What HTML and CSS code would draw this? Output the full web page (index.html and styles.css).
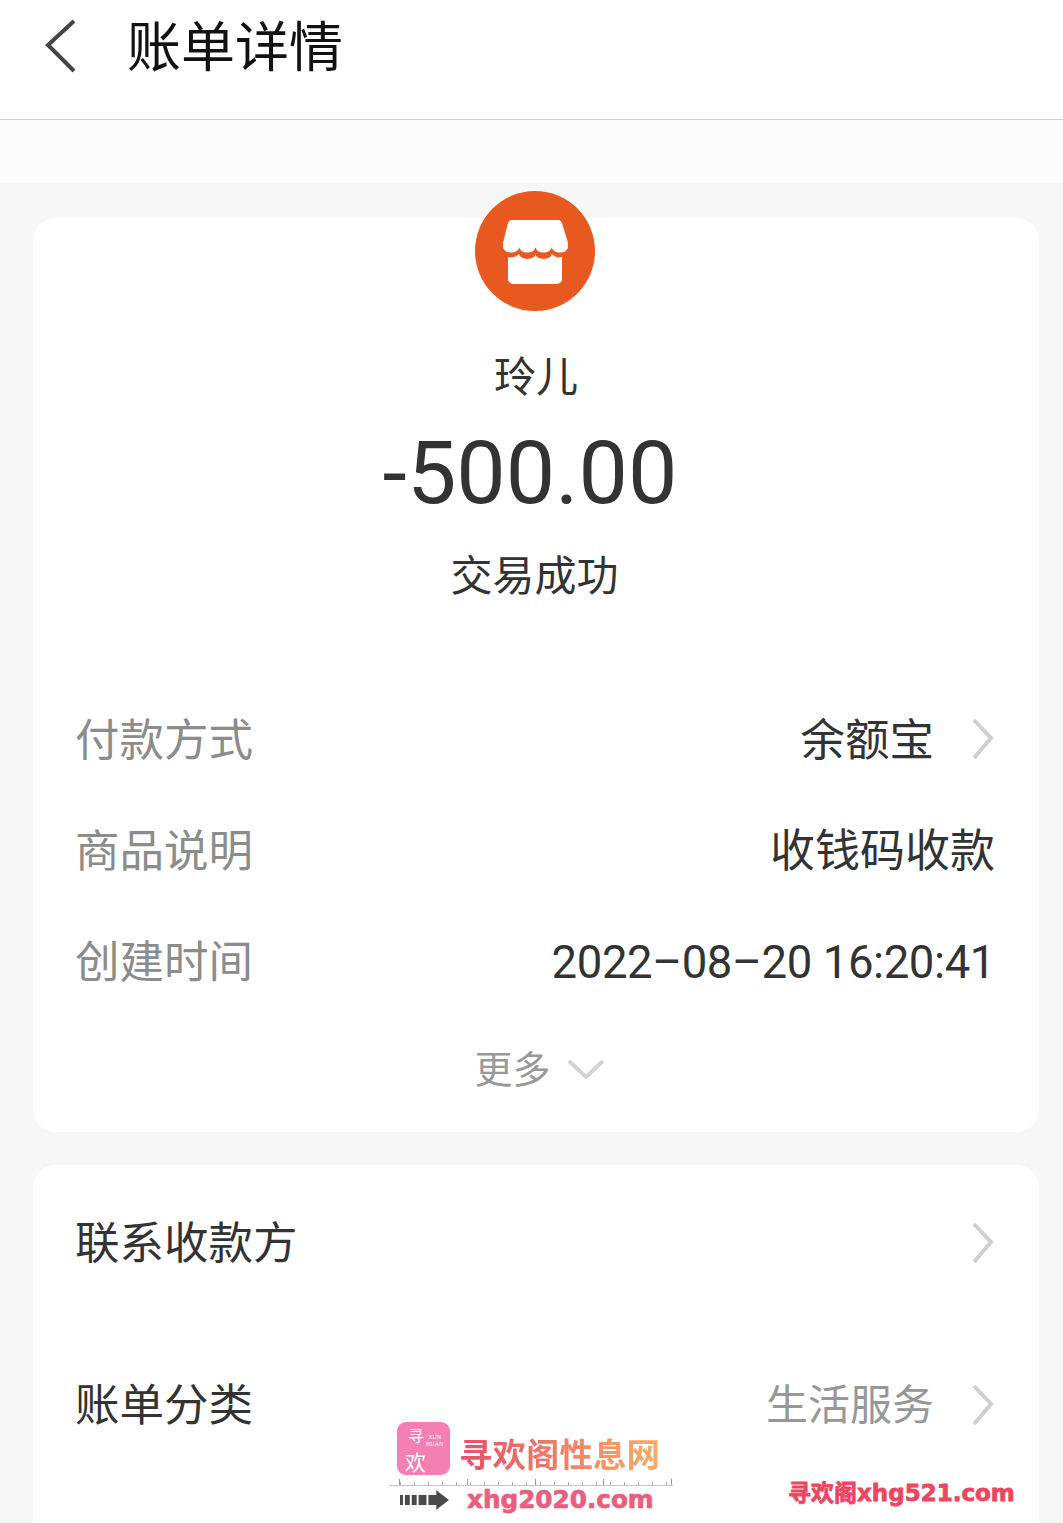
FILE: index.html
```html
<!DOCTYPE html>
<html lang="zh-CN">
<head>
    <meta charset="UTF-8">
    <meta name="viewport" content="width=device-width, initial-scale=1.0">
    <title>账单详情</title>
    <link rel="stylesheet" href="styles.css">
</head>
<body>
    <div class="page">
        <header class="header">
            <svg class="back-icon" viewBox="0 0 34 54">
                <path d="M30 2 L4 26 L30 52"></path>
            </svg>
            <h1 class="title">账单详情</h1>
        </header>
        <div class="band"></div>

        <section class="card card-main">
            <div class="avatar">
                <svg viewBox="0 0 120 120">
                    <circle cx="60" cy="60" r="60" fill="#e8591f"></circle>
                    <path fill="#fff" d="M37 29 H83 Q86 29 87 32 L93 52 V56 a8.125 5.5 0 0 1 -16.25 0 a8.125 5.5 0 0 1 -16.25 0 a8.125 5.5 0 0 1 -16.25 0 a8.125 5.5 0 0 1 -16.25 0 V52 L33 32 Q34 29 37 29 Z"></path>
                    <path fill="#fff" d="M33 66 Q38 68 44.25 63 a8.125 5 0 0 0 16.25 0 a8.125 5 0 0 0 16.25 0 Q82 68 87 66 V88 a5 5 0 0 1 -5 5 H38 a5 5 0 0 1 -5 -5 Z"></path>
                </svg>
            </div>
            <div class="name">玲儿</div>
            <div class="amount">-500.00</div>
            <div class="status">交易成功</div>

            <div class="rows">
                <div class="row">
                    <span class="label">付款方式</span>
                    <span class="value value-short">余额宝</span>
                    <svg class="arrow" viewBox="0 0 24 44"><path d="M3 3 L20 21 L3 41"></path></svg>
                </div>
                <div class="row">
                    <span class="label">商品说明</span>
                    <span class="value">收钱码收款</span>
                </div>
                <div class="row">
                    <span class="label">创建时间</span>
                    <span class="value date">2022–08–20 16:20:41</span>
                </div>
            </div>

            <div class="more">
                <span>更多</span>
                <svg class="more-icon" viewBox="0 0 38 22"><path d="M2 3 L19 19 L36 3"></path></svg>
            </div>
        </section>

        <section class="card card-second">
            <div class="row row-tall">
                <span class="label-dark">联系收款方</span>
                <svg class="arrow" viewBox="0 0 24 44"><path d="M3 3 L20 21 L3 41"></path></svg>
            </div>
            <div class="row row-tall">
                <span class="label-dark">账单分类</span>
                <span class="value muted">生活服务</span>
                <svg class="arrow" viewBox="0 0 24 44"><path d="M3 3 L20 21 L3 41"></path></svg>
            </div>
        </section>

        <!-- watermarks sit on top of the screenshot -->
        <div class="mark-site">
            <div class="mark-top">
                <div class="mark-logo">
                    <span class="mark-logo-xun">寻</span>
                    <span class="mark-logo-huan">欢</span>
                    <span class="mark-logo-en">XUN<br>HUAN</span>
                </div>
                <div class="mark-name">寻欢阁性息网</div>
            </div>
            <div class="mark-ruler"></div>
            <div class="mark-bottom">
                <svg class="mark-arrow" viewBox="0 0 50 20">
                    <path d="M0 5 H3 V15 H0 Z M5 5 H10 V15 H5 Z M12 5 H17 V15 H12 Z M19 5 H27 V15 H19 Z M29 5 H37 V0 L50 10 L37 20 V15 H29 Z"></path>
                </svg>
                <div class="mark-url">xhg2020.com</div>
            </div>
        </div>
        <div class="mark-corner">寻欢阁xhg521.com</div>
    </div>
</body>
</html>
```

FILE: styles.css
```css
* {
    box-sizing: border-box;
}
body {
    margin: 0;
    font-family: "Noto Sans CJK SC", "Noto Sans", sans-serif;
    background-color: #f7f7f7;
}
.page {
    position: relative;
    width: 1063px;
    height: 1523px;
    overflow: hidden;
}
.header {
    display: flex;
    align-items: flex-start;
    height: 120px;
    padding: 19px 0 0 44px;
    background-color: #fff;
    border-bottom: 1px solid #cfcfcf;
}
.back-icon {
    width: 34px;
    height: 54px;
    flex: none;
}
.back-icon path {
    fill: none;
    stroke: #444;
    stroke-width: 4;
}
.title {
    margin: -13px 0 0 49px;
    font-size: 54px;
    font-weight: 400;
    line-height: 76px;
    color: #111;
}
.band {
    height: 63px;
    background-color: #fcfcfc;
}
.card {
    display: flow-root;
    margin: 0 24px 0 33px;
    background-color: #fff;
    border-radius: 22px;
}
.card-main {
    height: 914px;
    margin-top: 35px;
    padding: 0 44px;
}
.card-second {
    height: 400px;
    margin-top: 33px;
    padding: 0 44px;
}
.avatar {
    width: 120px;
    height: 120px;
    margin: -27px 0 0 398px;
}
.avatar svg {
    display: block;
    width: 120px;
    height: 120px;
}
.name {
    margin-top: 31px;
    text-align: center;
    font-size: 42px;
    line-height: 64px;
    color: #333;
}
.amount {
    margin-top: 16px;
    margin-left: -12px;
    text-align: center;
    font-family: Roboto, sans-serif;
    font-size: 88px;
    line-height: 102px;
    color: #333;
}
.status {
    margin-top: 19px;
    margin-left: -3px;
    text-align: center;
    font-size: 42px;
    line-height: 60px;
    color: #333;
}
.rows {
    margin-top: 78px;
}
.row {
    display: flex;
    align-items: center;
    height: 111px;
}
.row-tall {
    height: 162px;
}
.row-tall:first-child {
    margin-top: -7px;
}
.label {
    margin-left: -2px;
    font-size: 44.5px;
    color: #8c8c8c;
}
.label-dark {
    margin-left: -2px;
    font-size: 44.5px;
    color: #333;
}
.value {
    margin-left: auto;
    font-size: 45px;
    color: #333;
}
.value-short {
    font-size: 44.5px;
}
.date {
    padding-top: 8px;
    font-family: Roboto, sans-serif;
    font-size: 45.5px;
    letter-spacing: -0.4px;
}
.muted {
    font-size: 42px;
    color: #979797;
}
.arrow {
    flex: none;
    width: 24px;
    height: 44px;
    margin-top: 4px;
    margin-left: 37px;
}
.row-tall .arrow {
    margin-top: 8px;
}
.label-dark + .arrow {
    margin-left: auto;
}
.arrow path {
    fill: none;
    stroke: #cfcfcf;
    stroke-width: 4;
}
.more {
    display: flex;
    justify-content: center;
    align-items: center;
    gap: 16px;
    margin-top: 25px;
    padding-left: 7px;
    font-size: 38px;
    line-height: 56px;
    color: #999;
}
.more-icon {
    width: 38px;
    height: 22px;
    margin-top: 4px;
}
.more-icon path {
    fill: none;
    stroke: #d4d4d4;
    stroke-width: 4;
}
.mark-site {
    position: absolute;
    left: 390px;
    top: 1422px;
    width: 283px;
}
.mark-top {
    display: flex;
    align-items: center;
    gap: 9px;
    padding-left: 7px;
}
.mark-logo {
    position: relative;
    width: 53px;
    height: 53px;
    border-radius: 9px;
    background-color: #f47fb2;
    color: #fff;
}
.mark-logo-xun {
    position: absolute;
    left: 11px;
    top: 2px;
    font-size: 16px;
    line-height: 23px;
}
.mark-logo-huan {
    position: absolute;
    left: 8px;
    top: 25px;
    font-size: 21px;
    line-height: 28px;
}
.mark-logo-en {
    position: absolute;
    left: 29px;
    top: 12px;
    font-family: "Liberation Serif", serif;
    font-size: 6px;
    line-height: 7px;
    text-align: center;
}
.mark-name {
    margin-top: 8px;
    font-size: 33.5px;
    line-height: 40px;
    font-weight: 700;
    background: linear-gradient(90deg, #e84f68, #f7ae66);
    -webkit-background-clip: text;
    background-clip: text;
    color: transparent;
}
.mark-ruler {
    height: 7px;
    margin-top: 4px;
    border-bottom: 1px solid #c4c4c4;
    background-image: repeating-linear-gradient(90deg, #999 0, #999 1px, transparent 1px, transparent 68px),
        repeating-linear-gradient(90deg, transparent 0, transparent 10px, #aaa 10px, #aaa 11px, transparent 11px, transparent 14px);
    background-size: 100% 6px, 100% 3px;
    background-position: 9px 0, 0 3px;
    background-repeat: no-repeat;
}
.mark-bottom {
    display: flex;
    align-items: center;
    gap: 18px;
    padding-left: 10px;
}
.mark-arrow {
    width: 49px;
    height: 20px;
    fill: #4a4a4a;
}
.mark-url {
    font-family: "DejaVu Sans", sans-serif;
    font-size: 24.7px;
    line-height: 28px;
    font-weight: 700;
    color: #e5607f;
    -webkit-text-stroke: 0.6px #e5607f;
    text-shadow: 0 0 3px #fbd5df;
}
.mark-corner {
    position: absolute;
    left: 788px;
    top: 1478px;
    font-family: "DejaVu Sans", "Noto Sans CJK SC", sans-serif;
    font-size: 23px;
    line-height: 30px;
    font-weight: 700;
    color: #ee4560;
    -webkit-text-stroke: 0.8px #ee4560;
}
```
